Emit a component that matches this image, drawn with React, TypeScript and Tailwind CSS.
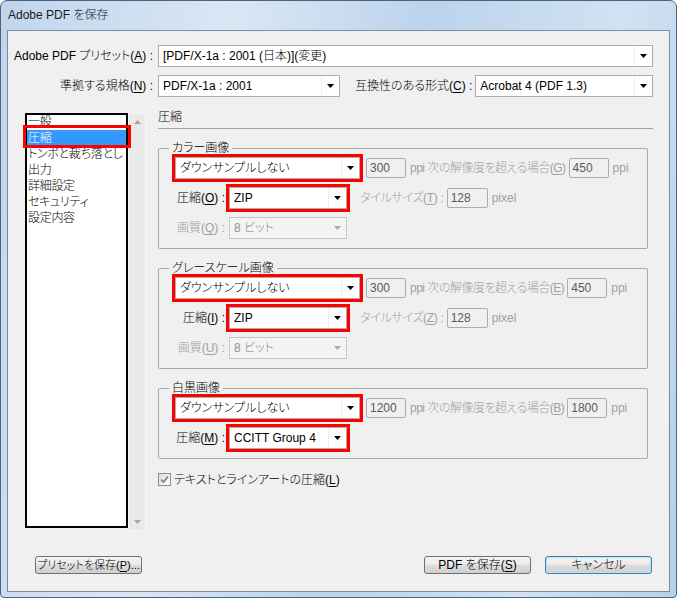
import React from "react";

const font = "font-['Liberation_Sans','Noto_Sans_CJK_JP',sans-serif] [font-feature-settings:'palt']";

function K({ children }: { children: React.ReactNode }) {
  return <span className="underline underline-offset-[2px]">{children}</span>;
}

function Arrow({ disabled }: { disabled?: boolean }) {
  return (
    <svg width="7" height="4" viewBox="0 0 7 4">
      <polygon points="0,0 7,0 3.5,4" fill={disabled ? "#a8a8a8" : "#000000"} />
    </svg>
  );
}

function Combo({
  value,
  className = "",
  disabled,
  mark,
}: {
  value: React.ReactNode;
  className?: string;
  disabled?: boolean;
  mark?: boolean;
}) {
  return (
    <div
      className={`relative flex h-[22px] items-center border ${
        disabled ? "border-[#c6c6c6] bg-[#f4f4f4] text-[#8e8e8e]" : "border-[#abadb3] bg-white text-black"
      } ${className}`}
    >
      <span className="flex-1 truncate pl-[4px]">{value}</span>
      <span className="flex h-full w-[18px] items-center justify-center border-l border-[#f0f0f0]">
        <Arrow disabled={disabled} />
      </span>
      {mark && <span className="pointer-events-none absolute -inset-[4px] z-10 border-[3px] border-[#ff0000]" />}
    </div>
  );
}

function Field({ value, w = "w-[40px]" }: { value: string; w?: string }) {
  return (
    <div className={`flex h-[20px] ${w} items-center rounded-[2px] border border-[#adadad] bg-[#f0f0f0] pl-[3px] text-[#5a5a5a]`}>
      {value}
    </div>
  );
}

function Group({
  title,
  res,
  max,
  resKey,
  compKey,
  tileKey,
  qualKey,
  comp,
}: {
  title: string;
  res: string;
  max: string;
  resKey: string;
  compKey: string;
  tileKey?: string;
  qualKey?: string;
  comp: string;
}) {
  return (
    <fieldset className="mr-[5px] mt-[12px] rounded-[2px] border border-[#a9a9a9] pb-[9px] pl-[16px] pt-[2px]">
      <legend className="-ml-[6px] px-[3px] leading-[14px]">{title}</legend>
      <div className="flex h-[22px] items-center whitespace-nowrap">
        <Combo value="ダウンサンプルしない" className="w-[185px]" mark />
        <div className="ml-[6px]">
          <Field value={res} />
        </div>
        <span className="ml-[4px] tracking-[-0.5px] text-[#a0a0a0]">
          ppi 次の解像度を超える場合(<K>{resKey}</K>)
        </span>
        <div className="ml-[3px]">
          <Field value={max} />
        </div>
        <span className="ml-[4px] text-[#a0a0a0]">ppi</span>
      </div>
      <div className="mt-[8px] flex h-[22px] items-center whitespace-nowrap">
        <span className="w-[54px] pr-[4px] text-right">
          圧縮(<K>{compKey}</K>) :
        </span>
        <Combo value={comp} className="w-[118px]" mark />
        {tileKey && (
          <>
            <span className="ml-[13px] tracking-[-0.3px] text-[#a0a0a0]">
              タイルサイズ(<K>{tileKey}</K>) :
            </span>
            <div className="ml-[3px]">
              <Field value="128" w="w-[41px]" />
            </div>
            <span className="ml-[4px] text-[#a0a0a0]">pixel</span>
          </>
        )}
      </div>
      {qualKey && (
        <div className="mt-[8px] flex h-[22px] items-center whitespace-nowrap">
          <span className="w-[54px] pr-[4px] text-right text-[#a0a0a0]">
            画質(<K>{qualKey}</K>) :
          </span>
          <Combo value="8 ビット" className="w-[118px]" disabled />
        </div>
      )}
    </fieldset>
  );
}

function Button({ children, primary, className = "" }: { children: React.ReactNode; primary?: boolean; className?: string }) {
  return (
    <button
      className={`flex h-[18px] w-[107px] items-center justify-center whitespace-nowrap rounded-[3px] border bg-[linear-gradient(#f3f3f3,#ececec_45%,#dddddd_50%,#cfcfcf)] text-black ${
        primary ? "border-[#3c7fb1] shadow-[inset_0_0_0_1px_#b9e1f8]" : "border-[#707070]"
      } ${className}`}
    >
      {children}
    </button>
  );
}

const items = ["一般", "圧縮", "トンボと裁ち落とし", "出力", "詳細設定", "セキュリティ", "設定内容"];

export default function App() {
  return (
    <div className={`${font} text-[12px] font-light text-black`}>
      <div className="h-[598px] w-[677px] rounded-t-[7px] rounded-b-[4px] border border-[#50627a] bg-[linear-gradient(100deg,#c0d5ed_0%,#d9e7f5_30%,#bcd3ec_55%,#d0e2f3_80%,#b9d0ea_100%)]">
        {/* Title */}
        <div className="h-[29px] pl-[7px] pt-[6px] leading-[16px] text-[#1a1a1a]">Adobe PDF を保存</div>

        {/* Body */}
        <div className="mx-[6px] flex h-[562px] flex-col border border-[#7c8c9e] bg-[#f0f0f0]">
          <div className="mt-[14px] flex h-[22px] items-center pr-[16px]">
            <span className="w-[145px] whitespace-nowrap text-right">
              Adobe PDF プリセット(<K>A</K>) :
            </span>
            <Combo value="[PDF/X-1a : 2001 (日本)](変更)" className="ml-[5px] flex-1" />
          </div>
          <div className="mt-[8px] flex h-[22px] items-center pr-[16px]">
            <span className="w-[145px] whitespace-nowrap text-right">
              準拠する規格(<K>N</K>) :
            </span>
            <Combo value="PDF/X-1a : 2001" className="ml-[5px] w-[182px]" />
            <span className="ml-[15px] whitespace-nowrap">
              互換性のある形式(<K>C</K>) :
            </span>
            <Combo value="Acrobat 4 (PDF 1.3)" className="ml-[3px] flex-1" />
          </div>

          <div className="mt-[16px] flex pl-[17px] pr-[16px]">
            {/* Category list */}
            <div className="relative h-[415px] w-[103px] border-2 border-black bg-white">
              <ul className="-mt-[1px]">
                {items.map((it) => (
                  <li
                    key={it}
                    className={`h-[16px] whitespace-nowrap pl-[1px] leading-[16px] tracking-[-0.3px] ${
                      it === "圧縮" ? "bg-[#3399ff] text-white" : ""
                    }`}
                  >
                    {it}
                  </li>
                ))}
              </ul>
              <span className="pointer-events-none absolute left-[-4px] top-[10px] h-[23px] w-[108px] border-[3px] border-[#ff0000]" />
            </div>
            <div className="flex h-[418px] w-[18px] flex-col items-center justify-between border border-[#f7f7f7] bg-[#e9e9e9] py-[6px]">
              <svg width="7" height="4" viewBox="0 0 7 4">
                <polygon points="3.5,0 7,4 0,4" fill="#a6a6a6" />
              </svg>
              <svg width="7" height="4" viewBox="0 0 7 4">
                <polygon points="0,0 7,0 3.5,4" fill="#a6a6a6" />
              </svg>
            </div>

            {/* Settings */}
            <div className="-mt-[3px] ml-[12px] flex-1">
              <div className="h-[14px] leading-[14px]">圧縮</div>
              <div className="mt-[4px] h-px bg-[#a0a0a0]" />

              <Group title="カラー画像" res="300" max="450" resKey="G" compKey="O" tileKey="T" qualKey="Q" comp="ZIP" />
              <Group title="グレースケール画像" res="300" max="450" resKey="E" compKey="I" tileKey="Z" qualKey="U" comp="ZIP" />
              <Group title="白黒画像" res="1200" max="1800" resKey="B" compKey="M" comp="CCITT Group 4" />

              <div className="mt-[14px] flex h-[13px] items-center">
                <span className="flex h-[13px] w-[13px] items-center justify-center border border-[#8e8f8f] bg-[linear-gradient(135deg,#dcdcdc,#ffffff)]">
                  <svg width="9" height="9" viewBox="0 0 9 9">
                    <path d="M1 4.5 L3.5 7 L8 1.5" fill="none" stroke="#6d7fa6" strokeWidth="1.6" />
                  </svg>
                </span>
                <span className="ml-[3px] whitespace-nowrap">
                  テキストとラインアートの圧縮(<K>L</K>)
                </span>
              </div>
            </div>
          </div>

          {/* Buttons */}
          <div className="mb-[17px] mt-auto flex items-center justify-between pl-[27px] pr-[17px]">
            <Button className="text-[11px]">
              プリセットを保存(<K>P</K>)...
            </Button>
            <div className="flex gap-[14px]">
              <Button>
                PDF を保存(<K>S</K>)
              </Button>
              <Button primary>キャンセル</Button>
            </div>
          </div>
        </div>
      </div>
    </div>
  );
}
